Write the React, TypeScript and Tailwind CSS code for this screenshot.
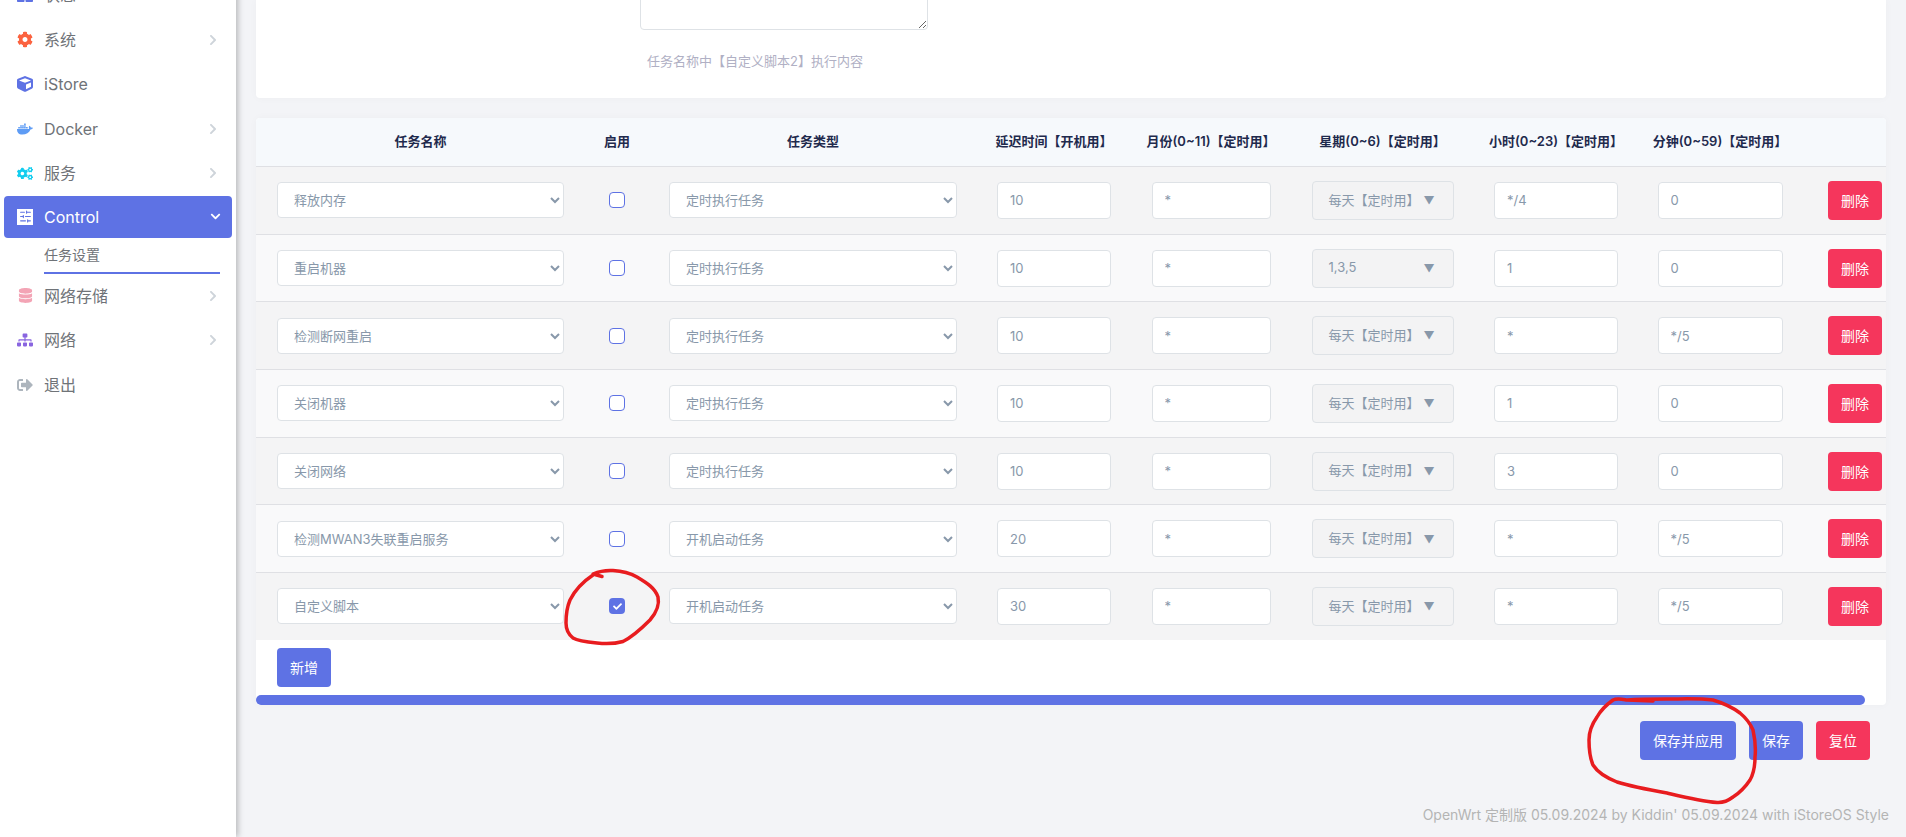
import { ReactNode } from "react";
import { FaCheck, FaChevronDown, FaChevronRight, FaCog, FaCogs, FaCube, FaDatabase, FaDocker, FaSignOutAlt, FaSitemap, FaThLarge } from "react-icons/fa";
import { LuSlidersHorizontal } from "react-icons/lu";

const EVERY_DAY = "每天【定时用】";
const TIMED = "定时执行任务";
const BOOT = "开机启动任务";

const taskNames = ["释放内存", "重启机器", "检测断网重启", "关闭机器", "关闭网络", "检测MWAN3失联重启服务", "自定义脚本"];

const rows = [
  { name: "释放内存", on: false, type: TIMED, delay: "10", week: EVERY_DAY, hour: "*/4", minute: "0" },
  { name: "重启机器", on: false, type: TIMED, delay: "10", week: "1,3,5", hour: "1", minute: "0" },
  { name: "检测断网重启", on: false, type: TIMED, delay: "10", week: EVERY_DAY, hour: "*", minute: "*/5" },
  { name: "关闭机器", on: false, type: TIMED, delay: "10", week: EVERY_DAY, hour: "1", minute: "0" },
  { name: "关闭网络", on: false, type: TIMED, delay: "10", week: EVERY_DAY, hour: "3", minute: "0" },
  { name: "检测MWAN3失联重启服务", on: false, type: BOOT, delay: "20", week: EVERY_DAY, hour: "*", minute: "*/5" },
  { name: "自定义脚本", on: true, type: BOOT, delay: "30", week: EVERY_DAY, hour: "*", minute: "*/5" },
];

const headers = ["任务名称", "启用", "任务类型", "延迟时间【开机用】", "月份(0~11)【定时用】", "星期(0~6)【定时用】", "小时(0~23)【定时用】", "分钟(0~59)【定时用】", ""];

const gridCols = "grid grid-cols-[329px_64px_328px_154px_160px_183px_164px_164px_84px]";

function MenuItem({ icon, label, arrow }: { icon: ReactNode; label: string; arrow?: boolean }) {
  return (
    <div className="h-[44.5px] flex items-center pl-[17px] pr-[17px] text-[16px] text-[#6f7378]">
      <span className="w-[16px] h-[16px] flex items-center justify-center shrink-0">{icon}</span>
      <span className="ml-[11px] flex-1">{label}</span>
      {arrow && <FaChevronRight size={12} className="text-[#ced4da]" />}
    </div>
  );
}

function Sidebar() {
  return (
    <aside className="w-[236px] shrink-0 bg-white shadow-[2px_0_6px_rgba(0,0,0,0.25)] z-10 -mt-[27px]">
      <MenuItem icon={<FaThLarge size={16} className="text-[#5e72e4]" />} label="状态" arrow />
      <MenuItem icon={<FaCog size={17} className="text-[#fb6340]" />} label="系统" arrow />
      <MenuItem icon={<FaCube size={16} className="text-[#5e72e4]" />} label="iStore" />
      <MenuItem icon={<FaDocker size={18} className="text-[#5e9cf5]" />} label="Docker" arrow />
      <MenuItem icon={<FaCogs size={17} className="text-[#11cdef]" />} label="服务" arrow />
      <div className="mx-[4px] h-[42px] bg-[#5e72e4] rounded-[4px] flex items-center pl-[13px] pr-[11px] text-[16px] text-white">
        <span className="w-[16px] h-[16px] bg-white flex items-center justify-center shrink-0">
          <LuSlidersHorizontal size={13} className="text-[#5e72e4]" />
        </span>
        <span className="ml-[11px] flex-1">Control</span>
        <FaChevronDown size={11} />
      </div>
      <div className="ml-[44px] mr-[16px] h-[36px] flex items-center text-[14px] text-[#6f7378] border-b-2 border-[#5e72e4]">任务设置</div>
      <MenuItem icon={<FaDatabase size={15} className="text-[#f3a4b5]" />} label="网络存储" arrow />
      <MenuItem icon={<FaSitemap size={16} className="text-[#8965e0]" />} label="网络" arrow />
      <MenuItem icon={<FaSignOutAlt size={16} className="text-[#adb5bd]" />} label="退出" />
    </aside>
  );
}

function Checkbox({ checked }: { checked: boolean }) {
  return checked ? (
    <span className="w-[16px] h-[16px] rounded-[4px] bg-[#5e72e4] flex items-center justify-center text-white">
      <FaCheck size={9} />
    </span>
  ) : (
    <span className="w-[16px] h-[16px] rounded-[4px] border border-[#5e72e4] bg-white" />
  );
}

function TextInput({ value, width }: { value: string; width: string }) {
  return (
    <input
      readOnly
      value={value}
      className={`${width} h-[37px] px-[12px] rounded-[4px] border border-[#dee2e6] bg-white text-[13px] text-[#8898aa]`}
    />
  );
}

function TaskRow({ row }: { row: (typeof rows)[number] }) {
  return (
    <div className={`${gridCols} h-[67.7px] items-center border-t border-[#dfe0e4] odd:bg-[#f9f9fa] even:bg-[#f4f4f5]`}>
      <div className="flex justify-center">
        <select defaultValue={row.name} className="w-[287px] h-[36px] pl-[12px] rounded-[4px] border border-[#dee2e6] bg-white text-[13px] text-[#8898aa]">
          {taskNames.map((name) => (
            <option key={name}>{name}</option>
          ))}
        </select>
      </div>
      <div className="flex justify-center">
        <Checkbox checked={row.on} />
      </div>
      <div className="flex justify-center">
        <select defaultValue={row.type} className="w-[288px] h-[36px] pl-[12px] rounded-[4px] border border-[#dee2e6] bg-white text-[13px] text-[#8898aa]">
          <option>{TIMED}</option>
          <option>{BOOT}</option>
        </select>
      </div>
      <div className="flex justify-center">
        <TextInput value={row.delay} width="w-[114px]" />
      </div>
      <div className="flex justify-center">
        <TextInput value="*" width="w-[119px]" />
      </div>
      <div className="flex justify-center">
        <div className="w-[142px] h-[39px] pl-[16px] pr-[18px] rounded-[4px] border border-[#dee2e6] bg-[#f3f3f4] text-[13px] text-[#8898aa] flex items-center justify-between">
          <span>{row.week}</span>
          <span className="text-[11px]">▼</span>
        </div>
      </div>
      <div className="flex justify-center">
        <TextInput value={row.hour} width="w-[124px]" />
      </div>
      <div className="flex justify-center">
        <TextInput value={row.minute} width="w-[125px]" />
      </div>
      <div className="flex justify-end pr-[4px]">
        <button className="w-[54px] h-[39px] rounded-[4px] bg-[#f5365c] text-white text-[14px]">删除</button>
      </div>
    </div>
  );
}

export default function App() {
  return (
    <div
      className="relative w-[1906px] h-[837px] overflow-hidden flex bg-[#f3f4f7]"
      style={{ fontFamily: '"Inter", "Noto Sans CJK SC", sans-serif' }}
    >
      <Sidebar />

      <main className="flex-1 px-[20px] min-w-0">
        <section className="h-[98px] overflow-hidden bg-white rounded-b-[4px] shadow-[0_0_8px_rgba(0,0,0,0.03)] pl-[384px]">
          <textarea readOnly className="block w-[288px] h-[100px] -mt-[70px] rounded-[4px] border border-[#dee2e6] bg-white" />
          <p className="mt-[21px] pl-[7px] leading-[20px] text-[13px] text-[#b0b0c4]">任务名称中【自定义脚本2】执行内容</p>
        </section>

        <section className="mt-[20px] h-[587px] bg-white rounded-[4px] shadow-[0_0_8px_rgba(0,0,0,0.03)] overflow-hidden">
          <div className={`${gridCols} h-[48px] items-center bg-[#f6f9fc] text-[13px] font-semibold text-[#1f2a4d]`}>
            {headers.map((title, i) => (
              <div key={i} className="text-center whitespace-nowrap">
                {title}
              </div>
            ))}
          </div>
          {rows.map((row) => (
            <TaskRow key={row.name} row={row} />
          ))}
          <div className="h-[55px] border-t-0 pt-[8px] pl-[21px]">
            <button className="w-[54px] h-[39px] rounded-[4px] bg-[#5e72e4] text-white text-[14px]">新增</button>
          </div>
          <div className="w-[1609px] h-[10px] rounded-full bg-[#5e72e4]" />
        </section>

        <div className="mt-[16px] pr-[16px] flex justify-end gap-[13px]">
          <button className="w-[96px] h-[39px] rounded-[4px] bg-[#5e72e4] text-white text-[14px]">保存并应用</button>
          <button className="w-[54px] h-[39px] rounded-[4px] bg-[#5e72e4] text-white text-[14px]">保存</button>
          <button className="w-[54px] h-[39px] rounded-[4px] bg-[#f5365c] text-white text-[14px]">复位</button>
        </div>

        <footer className="mt-[45px] -mr-[3px] text-right text-[14px] leading-[20px] text-[#b4b4b4]">
          OpenWrt 定制版 05.09.2024 by Kiddin' 05.09.2024 with iStoreOS Style
        </footer>
      </main>

      {/* red marks drawn on top of the screenshot */}
      <svg className="absolute inset-0 z-20 pointer-events-none" width="1906" height="837" fill="none" stroke="#e81c1f" strokeWidth="3.5" strokeLinecap="round" strokeLinejoin="round">
        <path d="M602 576.5 L593 574 C600 571 606 570 613 570.5 C623 571 630 573 637 577 C647 583 655 588 658 597 C660 606 656 613 650 620 C642 628 632 637 623 641.5 C614 644 605 644 597 643 C587 642 578 641 573 638 C568 634 566 629 566 623 C566 615 567 607 570 600 C575 590 584 581 593 575" />
        <path d="M1653 701 L1627 700 C1621 699 1617 698 1613 700 C1606 705 1601 710 1597 717 C1592 724 1589 732 1589 740 C1589 750 1590 758 1593 765 C1598 773 1607 778 1617 782 C1633 787 1650 790 1667 793 C1684 797 1700 801 1717 802.5 C1724 803 1729 800 1733 797 C1741 792 1746 786 1750 780 C1754 773 1755 765 1755 757 C1756 748 1755 739 1753 730 C1750 723 1746 718 1740 713 C1732 707 1723 703 1713 700 C1698 698 1682 699 1667 699 C1653 699 1640 699 1627 700" />
      </svg>
    </div>
  );
}
